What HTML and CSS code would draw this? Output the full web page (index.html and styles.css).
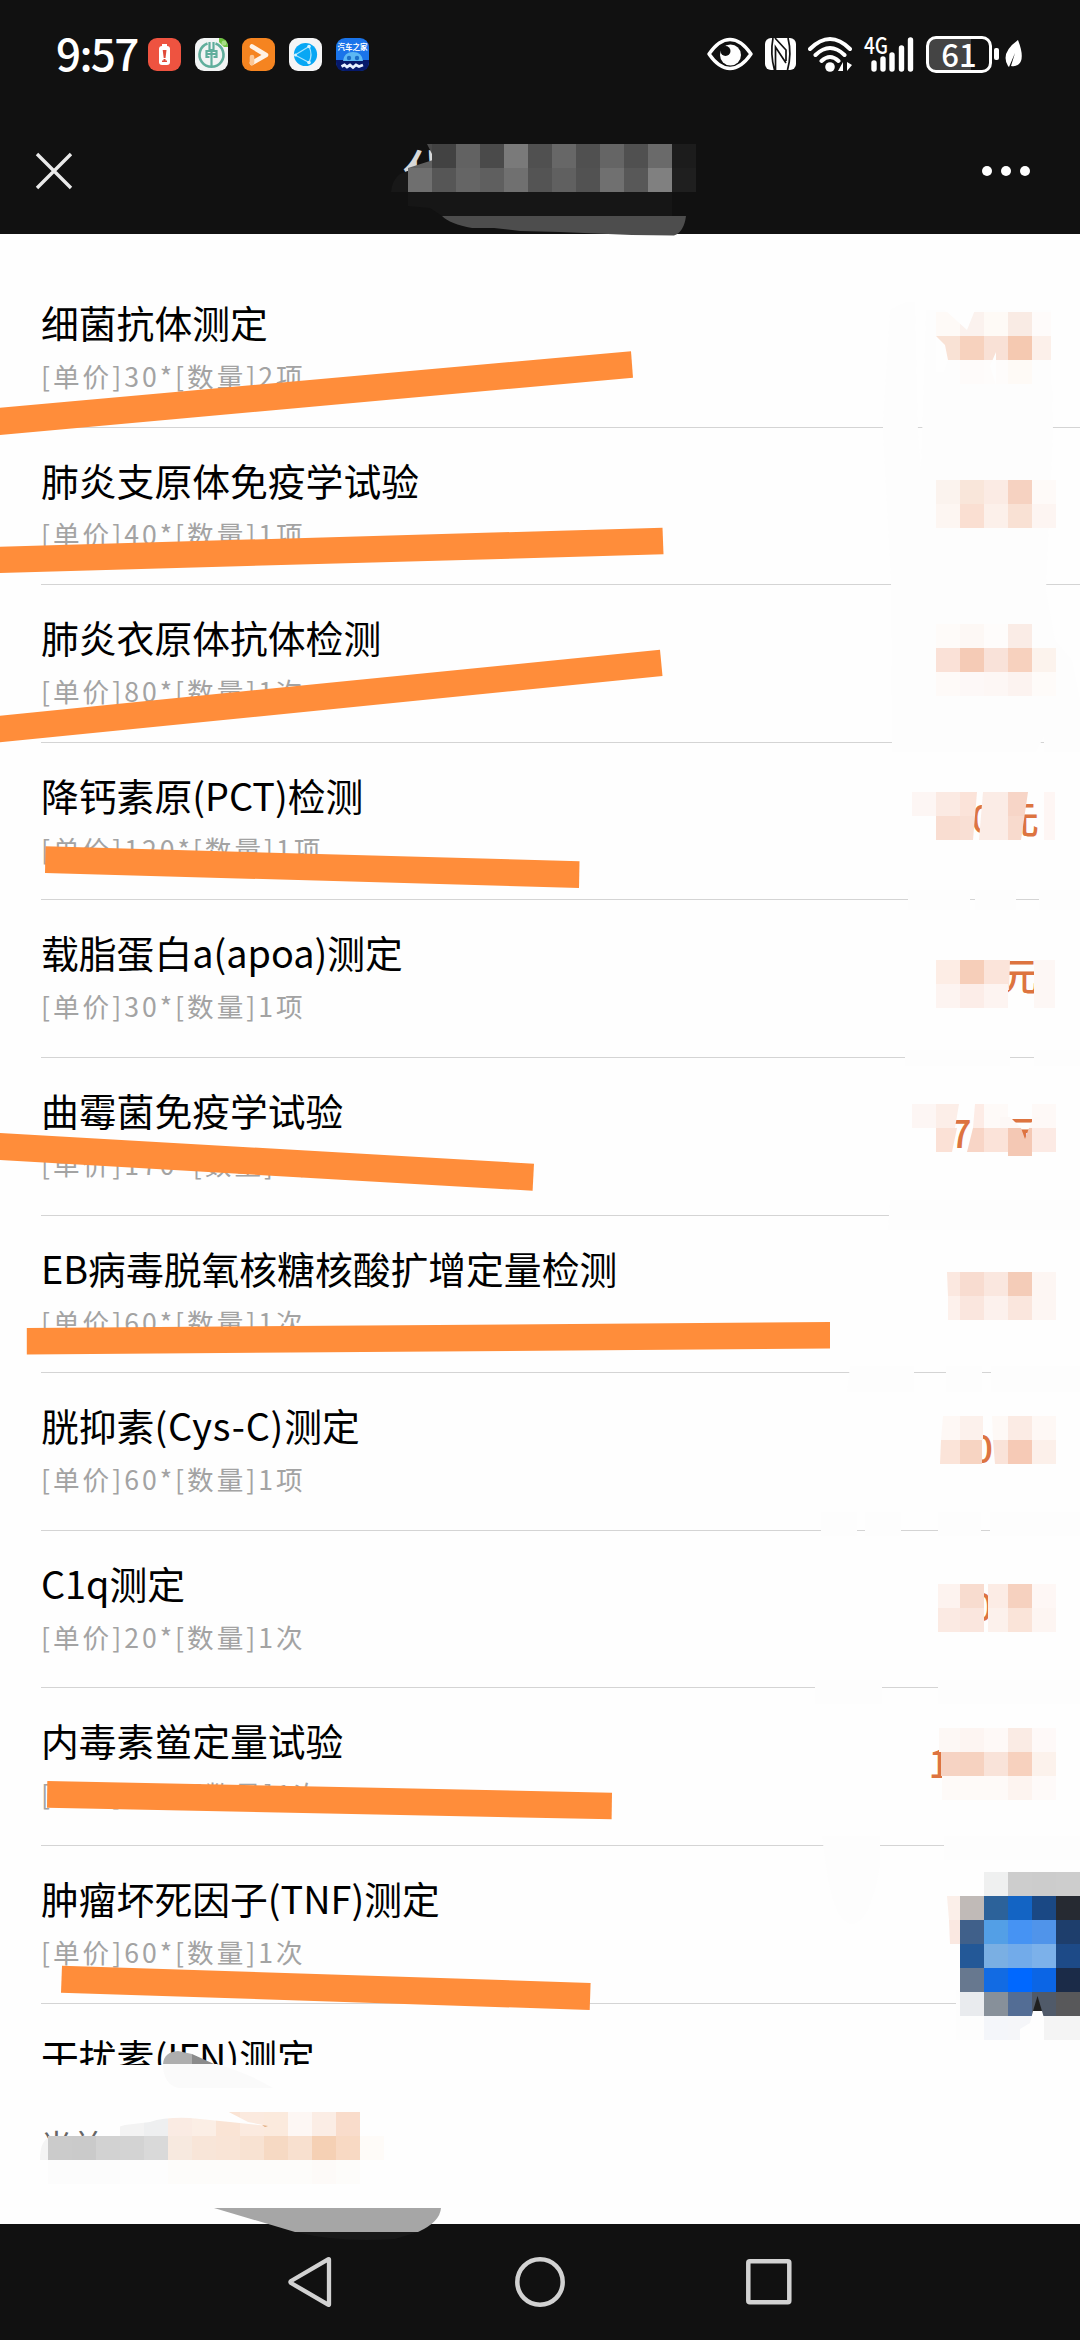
FILE: index.html
```html
<!DOCTYPE html>
<html lang="zh-CN">

<head>
    <meta charset="UTF-8">
    <title>费用明细</title>
    <link rel="stylesheet" href="styles.css">
</head>

<body>

    <section id="status">
        <span class="clock">9:57</span>
        <div class="apps">
            <svg class="app" viewBox="0 0 33 33">
                <rect width="33" height="33" rx="9" fill="#ee5340" />
                <rect x="14" y="6" width="5" height="4" fill="#fff" />
                <rect x="11" y="8" width="11" height="19" rx="3" fill="#fff" />
                <path d="M14.7 12h3.8l-1 8h-1.8zM15.5 21h2v1.500h1.500v1.500h-5v-1.500h1.500z" fill="#e04a3a" />
            </svg>
            <svg class="app" viewBox="0 0 33 33">
                <rect width="33" height="33" rx="9" fill="#f2f4f4" />
                <path d="M24 0q9 0 9 9h-4l-5-5z" fill="#6cc43c" />
                <circle cx="29" cy="5" r="2.500" fill="#a6dd86" />
                <path d="M12.500 5.500a12 12 0 1 0 8 0" fill="none" stroke="#60ae9c" stroke-width="2.600" />
                <path d="M14.500 4v9h-3v6h3M18.500 4v9h3v6h-3M16.500 11v18M12 16h9" fill="none" stroke="#60ae9c" stroke-width="2.200" />
            </svg>
            <svg class="app" viewBox="0 0 33 33">
                <rect width="33" height="33" rx="9" fill="#f58420" />
                <path d="M10 8.500l14 8.500-14 8" fill="none" stroke="#fff3e6" stroke-width="4.600" stroke-linecap="round" stroke-linejoin="round" />
                <path d="M10 19v6" stroke="#fcc795" stroke-width="4.600" stroke-linecap="round" />
            </svg>
            <svg class="app" viewBox="0 0 33 33">
                <rect width="33" height="33" rx="9" fill="#f5f5f6" />
                <circle cx="16.500" cy="16.500" r="11.600" fill="#08a7f4" />
                <path d="M6 17L20 8.500M6 17l14 7.500M20 8.500q4 8 0 16" fill="none" stroke="#a9e3fd" stroke-width="1.200" />
                <circle cx="20" cy="8.500" r="1.800" fill="#d9f3fe" />
                <circle cx="20" cy="24.500" r="1.800" fill="#d9f3fe" />
                <circle cx="6.500" cy="17" r="1.500" fill="#d9f3fe" />
            </svg>
            <svg class="app" viewBox="0 0 33 33">
                <rect width="33" height="33" rx="9" fill="#1a74ea" />
                <path d="M0 22h33v2q0 9-9 9H9q-9 0-9-9z" fill="#06196b" />
                <path d="M7 23q1-9 10-9t10 9z" fill="#5cb8f4" />
                <circle cx="13" cy="20" r="2.200" fill="#1b6fc9" />
                <circle cx="21" cy="20" r="2.200" fill="#1b6fc9" />
                <path d="M5.500 28.500l3-1.500 2.500 2 3-2 3 2.500 3-2.500 3 1.500 4-1.500" fill="none" stroke="#e7f1ff" stroke-width="2.800" />
                <text x="1.500" y="11.500" class="app-text">汽车之家</text>
            </svg>
        </div>
        <div class="signals">
            <svg width="46" height="34" viewBox="0 0 46 34">
                <path d="M2 17Q12 2.500 23 2.500T44 17Q34 31.500 23 31.500T2 17z" fill="none" stroke="#fff" stroke-width="3.400" stroke-linejoin="round" />
                <circle cx="23.500" cy="18" r="10.500" fill="#fff" />
                <circle cx="18.500" cy="14" r="5" fill="#111" />
            </svg>
            <svg class="nfc" width="31" height="34" viewBox="0 0 31 34">
                <rect y="1" width="31" height="32" rx="6" fill="#fff" />
                <path d="M8 1Q5 17 9.500 33M10.500 33V10L21 26M10 1L21 13V24M23 1Q27 17 22.500 33" fill="none" stroke="#111" stroke-width="1.700" />
            </svg>
            <svg class="wifi" width="44" height="36" viewBox="0 0 44 36">
                <path d="M2 13Q22-7 42 13M7.500 19Q22 5 36.500 19M13.500 25q8.500-8 17 0" fill="none" stroke="#fff" stroke-width="4" stroke-linecap="round" />
                <circle cx="22" cy="31" r="4.800" fill="#fff" />
                <path d="M35 26v9h-5zM39 26v9l5-6z" fill="#fff" />
            </svg>
            <svg class="cell" width="51" height="36" viewBox="0 0 51 36">
                <text x="0" y="18" class="net-text" textLength="24" lengthAdjust="spacingAndGlyphs">4G</text>
                <path d="M10 27v6M19 23v10M28 19v14M37.500 12v21M46.500 4v29" stroke="#fff" stroke-width="5.400" stroke-linecap="round" />
            </svg>
            <div class="battery"><span>61</span></div>
            <i class="nub"></i>
            <svg class="leaf" width="18" height="30" viewBox="0 0 18 30">
                <path d="M13 1q7 18 1 24-3 3-8 2l4-13-6 14-1-1Q-5 14 13 1z" fill="#fff" />
            </svg>
        </div>
    </section>

    <header>
        <svg class="close" width="38" height="38" viewBox="0 0 38 38">
            <path d="M2 2l34 34M36 2L2 36" stroke="#eaeaea" stroke-width="3.400" />
        </svg>
        <h1>代</h1>
        <svg class="more" width="50" height="12" viewBox="0 0 50 12">
            <circle cx="6" cy="6" r="5" fill="#fff" />
            <circle cx="25" cy="6" r="5" fill="#fff" />
            <circle cx="44" cy="6" r="5" fill="#fff" />
        </svg>
    </header>

    <section id="liste">
        <article>
            <h2>细菌抗体测定</h2>
            <p>[单价]30*[数量]2项</p>
        </article>
        <article>
            <h2>肺炎支原体免疫学试验</h2>
            <p>[单价]40*[数量]1项</p>
        </article>
        <article>
            <h2>肺炎衣原体抗体检测</h2>
            <p>[单价]80*[数量]1次</p>
        </article>
        <article>
            <h2>降钙素原(PCT)检测</h2>
            <p>[单价]120*[数量]1项</p>
            <span class="pris">0<b>元</b></span>
        </article>
        <article>
            <h2>载脂蛋白a(apoa)测定</h2>
            <p>[单价]30*[数量]1项</p>
            <span class="pris"><b>元</b></span>
        </article>
        <article>
            <h2>曲霉菌免疫学试验</h2>
            <p>[单价]170*[数量]1次</p>
            <span class="pris">70<b>元</b></span>
        </article>
        <article>
            <h2>EB病毒脱氧核糖核酸扩增定量检测</h2>
            <p>[单价]60*[数量]1次</p>
        </article>
        <article>
            <h2>胱抑素<span class="lat">(Cys-C)</span>测定</h2>
            <p>[单价]60*[数量]1项</p>
            <span class="pris">0<b></b></span>
        </article>
        <article>
            <h2>C1q测定</h2>
            <p>[单价]20*[数量]1次</p>
            <span class="pris">0<b></b></span>
        </article>
        <article>
            <h2>内毒素鲎定量试验</h2>
            <p>[单价]110*[数量]1次</p>
            <span class="pris foerste">1<b></b></span>
        </article>
        <article>
            <h2>肿瘤坏死因子(TNF)测定</h2>
            <p>[单价]60*[数量]1次</p>
        </article>
        <article>
            <h2>干扰素(IFN)测定</h2>
        </article>
    </section>

    <footer>
        <span>当前</span>
    </footer>

    <nav>
        <svg width="50" height="54" viewBox="0 0 50 54">
            <path d="M43 4.500v45q0 .5-.5.300L5 28q-1-1 0-2L42.500 4.200q.5-.2.500.3z" fill="none" stroke="#d2d2d2" stroke-width="4.300" stroke-linejoin="round" />
        </svg>
        <svg width="50" height="54" viewBox="0 0 50 54">
            <circle cx="25" cy="27" r="22.700" fill="none" stroke="#d2d2d2" stroke-width="4.500" />
        </svg>
        <svg width="50" height="54" viewBox="0 0 50 54">
            <rect x="4.300" y="6.300" width="41" height="41" rx="1.500" fill="none" stroke="#d2d2d2" stroke-width="4.500" />
        </svg>
    </nav>

    <!-- streger og slørede felter oven på siden -->
    <svg id="overlay" width="1080" height="2340" viewBox="0 0 1080 2340">
        <g fill="#fdfdfd">
            <path d="M883 422L890 310Q905 300 915 302L918 432 921 470 926 310H1051L1053 432 1046 590 1055 640 1072 660 1080 700V752H1044V736L1036 752H892L891 580 883 434z" />
            <path d="M908 890H970V910H908zM975 890H1016V910H975zM1039 890H1080V910H1039zM905 1050H1010V1066H905zM1034 1050H1080V1066H1034z" />
            <path d="M890 1200H1080V1230H888zM850 1366H914V1392H847zM946 1366H982V1392H946zM991 1366H1080V1392H991z" />
            <path d="M821 1512H857V1536H821zM865 1512H901V1536H865zM938 1512H981V1536H938zM990 1512H1080V1536H990z" />
            <path d="M815 1680H882V1704H815zM938 1680H1080V1704H938zM822 1836H880V1866Q870 1924 852 1924T826 1866zM944 1836H1080V1860H944zM956 1990H1080V2040H956z" />
        </g>

        <!-- titel -->
        <path d="M391 192Q392 180 400 174L420 166 433 163V168H408V192z" fill="#181818" />
        <path d="M408 192H672V216H442L430 208 408 206z" fill="#161616" />
        <path d="M408 168L433 160V170H408z" fill="#5f5f5f" />
        <path d="M427 144H433V154L432 154z" fill="#4a4a4a" />
        <path d="M442 216H686Q684 232 674 235.500L632 235 560 232 520 231 494 228 472 228Q450 224 442 216z" fill="#4d4d4d" />

        <g id="mosaik"></g>

        <!-- skæve felter i priskolonnen -->
        <path d="M936 330V336L945 345 948 360 944 372H936zM945 310H975L967 330zM996 352L990 366 996 385V352zM1051 310H1058V385H1051z" fill="#fefefe" />
        <path d="M960 792H977L975 816H960z" fill="#fbe3d9" />
        <path d="M960 816H975L973 840H960z" fill="#f9dfd4" />
        <path d="M983 792H1008V840H979z" fill="#fbece6" />
        <path d="M1008 792H1028L1024.500 816H1008z" fill="#f7d5c7" />
        <path d="M1008 816H1024.500L1021 840H1008z" fill="#f8dacd" />
        <path d="M1044 792H1055V840H1044z" fill="#fef6f4" />
        <path d="M1034 960H1055V1008H1034z" fill="#fdf7f5" />
        <path d="M1008 960H1010L1009 990H1008z" fill="#fbe4da" />
        <path d="M936 1104H959L955 1128H936z" fill="#fceee8" />
        <path d="M936 1128H957L952 1152H936z" fill="#fbe1d6" />
        <path d="M975 1104H984V1128H973z" fill="#fdece6" />
        <path d="M973 1128H984V1152H967z" fill="#f8d5c6" />
        <path d="M1000 1117H1010L1021 1128H1000zM1040 1117H1034L1029 1128H1040z" fill="#fdf8f6" />
        <path d="M1008 1128H1021L1025 1139 1029 1128H1032V1156H1008z" fill="#f4c8b4" />
        <path d="M947 1272H960V1296H948z" fill="#fbe8e0" />
        <path d="M948 1296H960V1320H948z" fill="#fdf1ec" />
        <path d="M943 1416H960V1440H941z" fill="#fef8f5" />
        <path d="M941 1440H960V1464H940z" fill="#fbe4d9" />
        <path d="M960 1416H983V1440H960z" fill="#fcf1ec" />
        <path d="M960 1440H982V1464H960z" fill="#f7d4c2" />
        <path d="M992 1416H1008V1440H993z" fill="#fef9f6" />
        <path d="M993 1440H1008V1464H995z" fill="#fae3d9" />
        <path d="M938 1584H960V1608H938z" fill="#fdf3ef" />
        <path d="M938 1608H960V1632H938z" fill="#fbeae3" />
        <path d="M988 1584H1008V1608H988z" fill="#fcece5" />
        <path d="M988 1608H1008V1632H988z" fill="#fcf1ec" />
        <path d="M939 1728H960V1752H939z" fill="#fdf8f5" />
        <path d="M941 1752H960V1776H941z" fill="#f6d3c3" />
        <path d="M942 1776H960V1800H942z" fill="#fefaf8" />
        <path d="M947 1896H960V1920H949z" fill="#fbefe9" />
        <path d="M949 1920H960V1944H950z" fill="#fae8e1" />
        <path d="M1033 2011H1042L1044 2018V2040H1020V2029L1030 2023z" fill="#fefefe" />
        <path d="M1037.500 1996L1042 2011H1033z" fill="#202020" />

        <!-- bund -->
        <path d="M163 2064Q164 2052 178 2051L192 2054V2064z" fill="#aeaeae" />
        <path d="M192 2054L214 2064H192z" fill="#8b8b8b" />
        <path d="M163 2064H217Q250 2074 273 2088H178Q163 2084 163 2064z" fill="#fafafa" />
        <path d="M40 2160Q40 2142 48 2138V2160z" fill="#f4f4f4" />
        <path d="M110 2110H225L248 2122 268 2126 230 2122 190 2118Q165 2117 150 2122L125 2125Q112 2128 107 2136H106z" fill="#fefefe" />
        <path d="M262 2125L268 2126 265 2127z" fill="#e0a878" />
        <path d="M214 2208H441Q440 2222 418 2232H295z" fill="#a6a6a6" />
        <path d="M295 2232H418L395 2239Q340 2243 295 2232z" fill="#181818" />

        <g fill="#ff8d3a">
            <path d="M0 407.700L631 351.300 633 377.700 0 435z" />
            <path d="M0 546.700L662.500 527.700 663.500 554.300 0 573z" />
            <path d="M0 715.700L660 649.700 662.500 676 0 742.300z" />
            <path d="M45.500 846.300L579.500 861.300 579 888 45 873z" />
            <path d="M0 1133L534 1163.700 532.600 1190.700 0 1160z" />
            <path d="M26.800 1328L830 1322V1348.500L26.800 1354.500z" />
            <path d="M47.300 1781L612 1792.700 611.600 1819.300 47 1807.700z" />
            <path d="M62 1965.700L590.600 1983 589.700 2010 61 1992.700z" />
        </g>
    </svg>

    <script>
        const size = 24;
        const mosaik = document.querySelector("#mosaik");

        // [x, y, farver fra venstre mod højre], "-" springer et felt over
        const felter = [
            [432, 144, "424242 626262 4a4a4a 7a7a7a 505050 676767 505050 656565 505050 6a6a6a 1c1c1c"],
            [408, 168, "6f6f6f 565656 656565 5f5f5f 707070 545454 606060 525252 707070 585858 808080 1f1f1f"],
            [936, 312, "fefaf7 fbf2ee fefaf6 f9ebe4 fefbfa"],
            [936, 336, "f9e2d5 f7d2be f9e1d6 f5c9b1 fcf0ea"],
            [936, 360, "- fefbfa fefcfb fefaf6"],
            [936, 480, "fbf3ee f9e6da fbebe4 f6d2c1 fefaf8"],
            [936, 504, "fdf6f2 fadfd2 fcf0ea f9e1d4 fdf5f2"],
            [936, 624, "fefbf9 fdf8f5 fefcfb faece6"],
            [936, 648, "fae1d7 f5cbb6 f9e2d9 f7d1be fcf3ed"],
            [936, 672, "fefaf8 fdf8f7 fdf7f5 fcf3f0 fefbf9"],
            [912, 792, "fdf6f4 fbeae3"],
            [936, 816, "f9ddd1"],
            [936, 960, "fdede5 f6ceb9 fbe4da"],
            [936, 984, "fdf4f1 fcede8 fdf4f1"],
            [912, 1104, "fdf6f4 - - fefaf8 - fef9f7"],
            [984, 1128, "fbe3d9 - fceae4"],
            [960, 1272, "f8dcd0 fae7df f4ccb8 fdf6f3"],
            [960, 1296, "fae6de fcf1ed fae6dd fdf6f3"],
            [1008, 1416, "fbebe4 fef8f5"],
            [1008, 1440, "f6cab6 fcf0ea"],
            [960, 1584, "f8dccf - f6d1bf fef7f5"],
            [960, 1608, "fae6de - fae4d9 fdf5f2"],
            [960, 1728, "fdf5f2 fef9f7 faebe4 fef9f8"],
            [960, 1752, "f6d2c0 f9e3d9 f7d1be fcf2ec"],
            [960, 1776, "fefaf8 fefaf8 fdf4f0 fefaf9"],
            [984, 1872, "eff0f0 cdcdcd cccccc cdcdcd"],
            [960, 1896, "c0bab7 2c629a 1364c4 1a4884 262a32"],
            [960, 1920, "40608a 539fe6 4693f3 5094ea 1e3e6c"],
            [960, 1944, "235897 7aafe3 72abea 7cb1ea 1d4a87"],
            [960, 1968, "67788f 126be3 0068ff 0b65e5 1b2b48"],
            [960, 1992, "e9ebee 87909a 536d95 505a69 58585a"],
            [984, 2016, "f4f6fa f5f6f9 f4f4f4 f4f4f4"],
            [120, 2112, "f3f3f3 eeeff0 faebe3 fbeee5 fae4d5 fbeadf fbeadd fdf7f4 fbede5 f9dccb"],
            [48, 2136, "cbcbcb cacaca d2d2d2 d3d3d3 d9d9d9 f7e9df f8e5d8 f9e4d6 f8e2d2 f6d9c3 f8e0cf f5d0b4 f8d9c3 fefbf8"],
            [48, 2160, "fcfcfc fcfcfc fcfcfc fdfdfd fdfdfd fdfcfa fdfcfa fdfcfa fdfcfa fdfcfa fdfcfa fdfaf8 fdfcfa"]
        ];

        felter.forEach(([x, y, farver]) => {
            farver.split(" ").forEach((farve, i) => {
                if (farve == "-") return;
                const rect = document.createElementNS("http://www.w3.org/2000/svg", "rect");
                rect.setAttribute("x", x + i * size);
                rect.setAttribute("y", y);
                rect.setAttribute("width", size);
                rect.setAttribute("height", size);
                rect.setAttribute("fill", "#" + farve);
                mosaik.appendChild(rect);
            });
        });
    </script>
</body>

</html>
```
FILE: styles.css
```css
* {
    box-sizing: border-box;
    margin: 0;
    padding: 0;
}

body {
    position: relative;
    width: 1080px;
    height: 2340px;
    overflow: hidden;
    background-color: #fefefe;
    font-family: "Noto Sans CJK SC", sans-serif;
}

svg {
    display: block;
    flex: none;
}

#status {
    display: flex;
    align-items: center;
    height: 108px;
    padding: 0 57px 0 56px;
    background-color: #111;
    color: #fff;
}

.clock {
    width: 92px;
    padding-bottom: 4px;
    font-size: 44px;
    font-weight: 500;
    line-height: 60px;
    letter-spacing: -1.7px;
}

.apps {
    display: flex;
    gap: 14px;
}

.app {
    width: 33px;
    height: 33px;
}

.app-text {
    font-size: 7.5px;
    font-weight: bold;
    fill: #fff;
}

.signals {
    display: flex;
    align-items: center;
    margin-left: auto;
}

.nfc {
    margin-left: 12px;
}

.wifi {
    margin-left: 12px;
}

.cell {
    margin-left: 12px;
    overflow: visible;
}

.net-text {
    font-size: 23px;
    font-weight: 500;
    fill: #fff;
}

.battery {
    width: 66px;
    height: 37px;
    margin-left: 11px;
    border: 3px solid #fff;
    border-radius: 10px;
    background: linear-gradient(to right, #444 42px, #111 42px);
    font-size: 31px;
    font-weight: 500;
    line-height: 29px;
    text-align: center;
}

.nub {
    width: 5px;
    height: 12px;
    margin-left: 2px;
    border-radius: 2px;
    background-color: #fff;
}

.leaf {
    margin-left: 6px;
}

header {
    display: flex;
    align-items: center;
    height: 126px;
    padding: 0 49px 0 35px;
    background-color: #111;
}

header h1 {
    margin-left: 330px;
    padding-bottom: 5px;
    color: #d8d8d8;
    font-size: 48px;
    font-weight: 500;
    line-height: 60px;
}

.more {
    margin-left: auto;
}

#liste {
    height: 1831px;
    padding: 36px 0 0 41px;
    overflow: hidden;
}

article {
    display: grid;
    grid-template-columns: 1fr auto;
    grid-template-rows: 54px 40px;
    row-gap: 7px;
    height: 157.6px;
    padding-top: 25px;
    border-bottom: 1px solid #d4d4d4;
}

h2 {
    grid-column: 1;
    color: #000;
    font-size: 37.8px;
    font-weight: 400;
    line-height: 54px;
    white-space: nowrap;
}

.lat {
    letter-spacing: 0.8px;
}

article p {
    grid-column: 1;
    color: #a3a3a3;
    font-size: 26.6px;
    line-height: 40px;
    letter-spacing: 3px;
    white-space: nowrap;
}

.pris {
    grid-column: 2;
    grid-row: 1 / 3;
    align-self: center;
    display: flex;
    padding: 0 41px 3px 0;
    color: #dd7440;
    font-size: 37.8px;
    font-weight: 500;
    line-height: 54px;
}

.pris b {
    width: 38px;
    margin-left: 8px;
    font-weight: 500;
}

.foerste {
    padding-right: 84px;
}

footer {
    height: 159px;
    padding: 54px 41px 0;
    color: #666;
    font-size: 31px;
    line-height: 50px;
    letter-spacing: 0.5px;
}

nav {
    display: flex;
    justify-content: center;
    gap: 179px;
    height: 116px;
    padding-top: 31px;
    background-color: #111;
}

#overlay {
    position: absolute;
    left: 0;
    top: 0;
}
```
